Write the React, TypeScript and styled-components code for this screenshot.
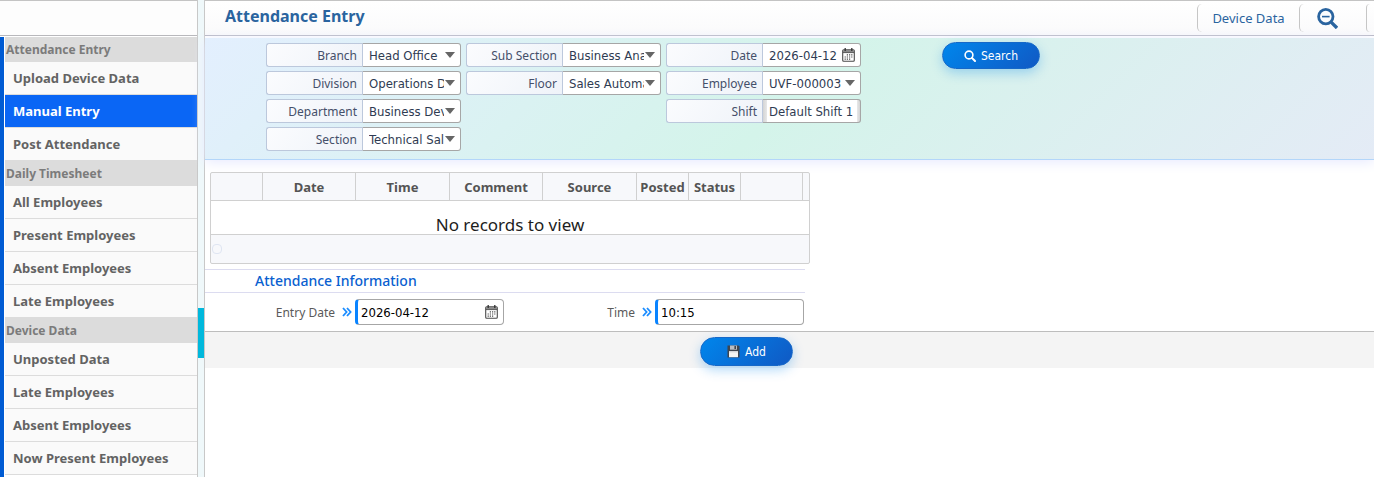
import React from "react";
import styled, { createGlobalStyle, css } from "styled-components";

const sans = `"Noto Sans", "Open Sans", sans-serif`;
const fieldSans = `"DejaVu Sans Condensed", "Noto Sans", sans-serif`;

const GlobalStyle = createGlobalStyle`
  *, *::before, *::after { box-sizing: border-box; }
  body { margin: 0; background: #fff; font-family: ${sans}; font-size: 13px; color: #2f3b52; }
  button, input, select { font: inherit; }
`;

const Page = styled.div`
  display: flex;
  min-height: 100vh;
`;

/* Sidebar */
const Sidebar = styled.aside`
  flex: 0 0 198px;
  display: flex;
  flex-direction: column;
  border-right: 1px solid #c8c8c8;
`;

const SidebarTop = styled.div`
  height: 36px;
  flex: none;
  border-top: 1px solid #c4c4c4;
  border-bottom: 1px solid #b8b8bc;
  background: #fdfdfd;
`;

const Menu = styled.nav`
  margin-top: 1px;
  padding-left: 1px;
  flex: 1;
  border-left: 4px solid #005bd3;
`;

const GroupTitle = styled.h2`
  margin: 0;
  padding-left: 1px;
  height: 25px;
  line-height: 26px;
  font-size: 12px;
  font-weight: 700;
  color: #7b7b7b;
  background: #dcdcdc;
`;

const MenuLink = styled.a<{ $active?: boolean }>`
  display: block;
  height: 33px;
  padding-left: 8px;
  line-height: 32px;
  font-size: 13px;
  font-weight: 700;
  text-decoration: none;
  color: ${(p) => (p.$active ? "#fff" : "#636363")};
  background: ${(p) => (p.$active ? "#0a66f5" : "#fafafa")};
  border-bottom: 1px solid #dcdcdc;
`;

const Splitter = styled.div`
  flex: 0 0 7px;
  padding-top: 308px;
  background: #eff8fa;
  border-right: 1px solid #c8c8c8;
`;

const SplitterHandle = styled.div`
  height: 50px;
  background: #00b8dc;
`;

/* Main */
const Main = styled.main`
  flex: 1;
  min-width: 0;
`;

const TitleBar = styled.header`
  display: flex;
  justify-content: space-between;
  height: 36px;
  padding-left: 20px;
  border-top: 1px solid #c4c4c4;
  border-bottom: 1px solid #b4b4c0;
  background: linear-gradient(#ffffff, #fafafb);
`;

const PageTitle = styled.h1`
  margin: 0;
  line-height: 30px;
  font-size: 16px;
  font-weight: 700;
  color: #2a649f;
`;

const Tabs = styled.div`
  display: flex;
  padding: 3px 0;
`;

const tab = css`
  display: flex;
  align-items: center;
  border: 0;
  border-left: 1px solid #c6c6c6;
  border-radius: 5px;
  background: none;
  color: #2a649f;
`;

const TabLink = styled.a`
  ${tab}
  justify-content: center;
  width: 102px;
  font-size: 13px;
  text-decoration: none;
`;

const ZoomTab = styled.button`
  ${tab}
  width: 67px;
  padding: 0 0 0 17px;
`;

const EndTab = styled.button`
  ${tab}
  width: 8px;
  padding: 0;
`;

const Filters = styled.form`
  display: flex;
  align-items: flex-start;
  margin-top: 2px;
  height: 122px;
  padding: 4px 0 0 61px;
  border-bottom: 1px solid #b3d6fa;
  background: linear-gradient(135deg, #e3effe 0%, #d4f4ea 50%, #e4ebf6 100%);
  box-shadow: 0 2px 12px #e6e9ff;
`;

const FilterColumn = styled.div`
  display: grid;
  grid-template-columns: minmax(0, 1fr);
  gap: 4px;
  flex: none;
  width: 195px;
  margin: 1px 5px 0 0;
`;

const FilterRow = styled.div`
  display: flex;
  height: 24px;
`;

const FilterLabel = styled.label`
  flex: none;
  width: 96px;
  padding-right: 5px;
  line-height: 24px;
  font-size: 12px;
  text-align: right;
  color: #45506a;
  border: 1px solid #bcc8dc;
  border-right: 0;
  border-radius: 3px 0 0 3px;
  background: linear-gradient(135deg, #fbfcfe, #eff3f9);
`;

const FieldBox = styled.div`
  display: flex;
  align-items: center;
  flex: 1;
  min-width: 0;
  padding-right: 5px;
  border: 1px solid #a6a6a6;
  border-left-color: #bcc8dc;
  border-radius: 0 3px 3px 0;
  background: #fff;
`;

const Select = styled.select`
  appearance: none;
  flex: 1;
  min-width: 0;
  height: 22px;
  padding: 0 0 0 6px;
  border: 0;
  outline: 0;
  background: transparent;
  font-family: ${fieldSans};
  font-size: 13px;
  color: #2f3b52;
`;

const Arrow = styled.svg`
  flex: none;
  margin-left: 1px;
  pointer-events: none;
`;

const FieldInput = styled.input`
  flex: 1;
  min-width: 0;
  height: 22px;
  padding: 0 0 0 6px;
  border: 0;
  outline: 0;
  background: transparent;
  font-family: ${fieldSans};
  font-size: 13px;
  color: #2f3b52;
`;

const ReadonlyBox = styled(FieldBox)`
  padding-right: 3px;
  background: linear-gradient(90deg, #d4d4d4, #e8e8e8 4px, #fff 4px, #fff 94px, #e8e8e8 94px, #d4d4d4);
`;

const IconButton = styled.button`
  display: flex;
  flex: none;
  padding: 0;
  border: 0;
  background: none;
`;

const PillButton = styled.button<{ $width: number; $height: number }>`
  display: flex;
  align-items: center;
  justify-content: center;
  gap: 5px;
  width: ${(p) => p.$width}px;
  height: ${(p) => p.$height}px;
  padding: 0;
  border: 1px solid #1668c8;
  border-radius: 15px;
  background: linear-gradient(135deg, #0086ec, #1059c4);
  box-shadow: 0 4px 12px rgba(0, 134, 236, 0.3);
  font-family: ${fieldSans};
  font-size: 12px;
  color: #fff;
`;

const SearchArea = styled.div`
  margin-left: 76px;
`;

/* Records grid */
const Grid = styled.div`
  max-width: 600px;
  margin: 12px 0 0 5px;
  border: 1px solid #d0d0d0;
  border-radius: 2px;
  background: #f7f8fb;
`;

const RecordTable = styled.table`
  width: 100%;
  table-layout: fixed;
  border-collapse: separate;
  border-spacing: 0;
`;

const HeadCell = styled.th<{ $width?: number }>`
  width: ${(p) => (p.$width ? `${p.$width}px` : "auto")};
  height: 28px;
  padding: 0;
  font-size: 13px;
  font-weight: 700;
  color: #545454;
  border-right: 1px solid #d0d0d0;
  border-bottom: 1px solid #d0d0d0;
  &:last-child { border-right: 0; }
`;

const EmptyCell = styled.td`
  height: 34px;
  padding: 14px 0 0;
  line-height: 19px;
  font-size: 17px;
  text-align: center;
  color: #1d1d1d;
  background: #fff;
  border-bottom: 1px solid #d0d0d0;
`;

const GridFooter = styled.div`
  display: flex;
  align-items: center;
  height: 28px;
  padding-left: 1px;
`;

const FooterCheck = styled.input`
  appearance: none;
  width: 10px;
  height: 10px;
  margin: 0;
  border: 1px solid #dfe5f2;
  border-radius: 4px;
`;

/* Entry form */
const SectionTitle = styled.h2`
  max-width: 600px;
  height: 24px;
  margin: 5px 0 0;
  padding-left: 50px;
  line-height: 22px;
  font-size: 14px;
  font-weight: 500;
  color: #0a5fd0;
  border-top: 1px solid #dcdcf0;
  border-bottom: 1px solid #dcdcf0;
`;

const EntryRow = styled.div`
  display: grid;
  grid-template-columns: 299px 299px;
  column-gap: 1px;
  padding: 6px 0;
`;

const EntryField = styled.div`
  display: flex;
  align-items: center;
  justify-content: flex-end;
`;

const EntryLabel = styled.label`
  display: flex;
  align-items: center;
  gap: 7px;
  margin-right: 3px;
  font-size: 12px;
  color: #5a5a5a;
`;

const EntryBox = styled.div`
  display: flex;
  align-items: center;
  width: 149px;
  height: 26px;
  padding-right: 5px;
  border: 1px solid #a6a6a6;
  border-left: 3px solid #0a84ff;
  border-radius: 4px;
  background: #fff;
`;

const EntryInput = styled(FieldInput)`
  padding-left: 3px;
  color: #000;
`;

const ActionBar = styled.div`
  height: 37px;
  padding: 5px 0 0 495px;
  border-top: 1px solid #bdbdbd;
  background: #f4f4f4;
`;

const CalendarIcon = () => (
  <svg width="13" height="14" viewBox="0 0 13 14" aria-hidden="true">
    <rect x="0.7" y="1.7" width="11.6" height="11.6" rx="1" fill="#fff" stroke="#4a4a4a" strokeWidth="1.1" />
    <path d="M1 2h11v2.4H1z" fill="#8a8a8a" />
    <path d="M1 4.6h11" stroke="#4a4a4a" strokeWidth="0.9" />
    <path d="M3.2 0v3M9.8 0v3" stroke="#333" strokeWidth="1.3" />
    <path d="M4.8 6.9h6.2M2.6 9h8.4M2.6 11.1h6" stroke="#4a4a4a" strokeWidth="1.1" strokeDasharray="1.2 1" />
  </svg>
);

const SearchIcon = () => (
  <svg width="12" height="12" viewBox="0 0 12 12" fill="none" stroke="#fff" aria-hidden="true">
    <circle cx="5" cy="5" r="3.9" strokeWidth="1.6" />
    <path d="M8 8l3 3" strokeWidth="2" strokeLinecap="round" />
  </svg>
);

const ZoomOutIcon = () => (
  <svg width="21" height="21" viewBox="0 0 21 21" fill="none" stroke="#2a649f" aria-hidden="true">
    <circle cx="8.8" cy="8.6" r="7.2" strokeWidth="2.8" />
    <path d="M5 8.6h7.6" strokeWidth="1.6" />
    <path d="M14 14l1.8 1.8" strokeWidth="2.2" />
    <path d="M15.6 15.6l3.2 3.2" strokeWidth="3.4" strokeLinecap="square" />
  </svg>
);

const ChevronsIcon = () => (
  <svg width="10" height="10" viewBox="0 0 10 10" fill="none" stroke="#1a8cff" strokeWidth="1.8" aria-hidden="true">
    <path d="M1 1l3.6 4L1 9M5 1l3.6 4L5 9" />
  </svg>
);

const FloppyIcon = () => (
  <svg width="13" height="13" viewBox="0 0 13 13" aria-hidden="true">
    <path d="M0.5 0.5h11l1 1v11h-12z" fill="#3f454d" />
    <path d="M3 0.5h7v4.2H3z" fill="#b9bec4" />
    <path d="M7.4 1h1.6v3H7.4z" fill="#3f454d" />
    <path d="M2 6.2h9v6H2z" fill="#f4f4f2" />
    <path d="M2 6.2h9v1.2H2z" fill="#d5d8da" />
  </svg>
);

const menu = [
  { title: "Attendance Entry", items: ["Upload Device Data", "Manual Entry", "Post Attendance"] },
  { title: "Daily Timesheet", items: ["All Employees", "Present Employees", "Absent Employees", "Late Employees"] },
  { title: "Device Data", items: ["Unposted Data", "Late Employees", "Absent Employees", "Now Present Employees"] },
];

const columns: { label: string; width?: number }[] = [
  { label: "", width: 52 },
  { label: "Date", width: 93 },
  { label: "Time", width: 94 },
  { label: "Comment", width: 93 },
  { label: "Source", width: 94 },
  { label: "Posted", width: 52 },
  { label: "Status", width: 52 },
  { label: "", width: 62 },
  { label: "" },
];

const SelectField = ({ id, label, value }: { id: string; label: string; value: string }) => (
  <FilterRow>
    <FilterLabel htmlFor={id}>{label}</FilterLabel>
    <FieldBox>
      <Select id={id} defaultValue={value}>
        <option>{value}</option>
      </Select>
      <Arrow width="10" height="6" viewBox="0 0 10 6" aria-hidden="true">
        <path d="M0 0h10L5 6z" fill="#666" />
      </Arrow>
    </FieldBox>
  </FilterRow>
);

export default function App() {
  return (
    <Page>
      <GlobalStyle />
      <Sidebar>
        <SidebarTop />
        <Menu>
          {menu.map((group) => (
            <React.Fragment key={group.title}>
              <GroupTitle>{group.title}</GroupTitle>
              {group.items.map((item) => (
                <MenuLink key={item} href="#" $active={item === "Manual Entry"}>
                  {item}
                </MenuLink>
              ))}
            </React.Fragment>
          ))}
        </Menu>
      </Sidebar>
      <Splitter>
        <SplitterHandle />
      </Splitter>
      <Main>
        <TitleBar>
          <PageTitle>Attendance Entry</PageTitle>
          <Tabs>
            <TabLink href="#">Device Data</TabLink>
            <ZoomTab aria-label="Zoom out">
              <ZoomOutIcon />
            </ZoomTab>
            <EndTab aria-label="More" />
          </Tabs>
        </TitleBar>

        <Filters onSubmit={(e) => e.preventDefault()}>
          <FilterColumn>
            <SelectField id="branch" label="Branch" value="Head Office" />
            <SelectField id="division" label="Division" value="Operations Department" />
            <SelectField id="department" label="Department" value="Business Development" />
            <SelectField id="section" label="Section" value="Technical Sales" />
          </FilterColumn>
          <FilterColumn>
            <SelectField id="subsection" label="Sub Section" value="Business Analysis" />
            <SelectField id="floor" label="Floor" value="Sales Automation" />
          </FilterColumn>
          <FilterColumn>
            <FilterRow>
              <FilterLabel htmlFor="date">Date</FilterLabel>
              <FieldBox>
                <FieldInput id="date" defaultValue="2026-04-12" />
                <IconButton type="button" aria-label="Pick date">
                  <CalendarIcon />
                </IconButton>
              </FieldBox>
            </FilterRow>
            <SelectField id="employee" label="Employee" value="UVF-000003" />
            <FilterRow>
              <FilterLabel htmlFor="shift">Shift</FilterLabel>
              <ReadonlyBox>
                <FieldInput id="shift" readOnly defaultValue="Default Shift 1" />
              </ReadonlyBox>
            </FilterRow>
          </FilterColumn>
          <SearchArea>
            <PillButton type="submit" $width={98} $height={27}>
              <SearchIcon />
              Search
            </PillButton>
          </SearchArea>
        </Filters>

        <Grid>
          <RecordTable>
            <thead>
              <tr>
                {columns.map((c, i) => (
                  <HeadCell key={i} $width={c.width}>
                    {c.label}
                  </HeadCell>
                ))}
              </tr>
            </thead>
            <tbody>
              <tr>
                <EmptyCell colSpan={columns.length}>No records to view</EmptyCell>
              </tr>
            </tbody>
          </RecordTable>
          <GridFooter>
            <FooterCheck type="checkbox" aria-label="Select all" />
          </GridFooter>
        </Grid>

        <SectionTitle>Attendance Information</SectionTitle>
        <EntryRow>
          <EntryField>
            <EntryLabel htmlFor="entry-date">
              Entry Date
              <ChevronsIcon />
            </EntryLabel>
            <EntryBox>
              <EntryInput id="entry-date" defaultValue="2026-04-12" />
              <IconButton type="button" aria-label="Pick entry date">
                <CalendarIcon />
              </IconButton>
            </EntryBox>
          </EntryField>
          <EntryField>
            <EntryLabel htmlFor="entry-time">
              Time
              <ChevronsIcon />
            </EntryLabel>
            <EntryBox>
              <EntryInput id="entry-time" defaultValue="10:15" />
            </EntryBox>
          </EntryField>
        </EntryRow>
        <ActionBar>
          <PillButton type="button" $width={93} $height={29}>
            <FloppyIcon />
            Add
          </PillButton>
        </ActionBar>
      </Main>
    </Page>
  );
}
